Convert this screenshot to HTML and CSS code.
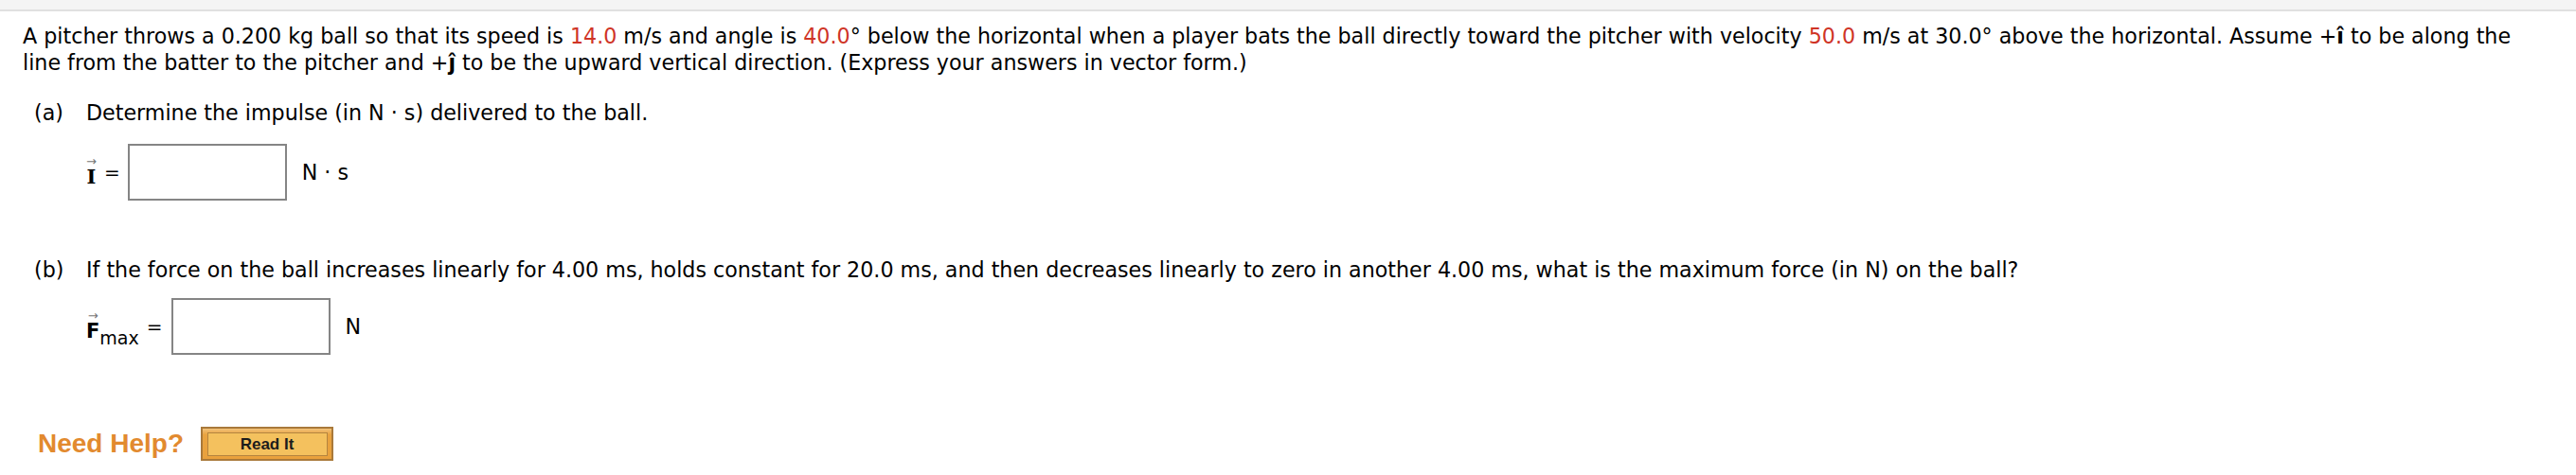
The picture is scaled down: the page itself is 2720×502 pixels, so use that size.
FILE: index.html
```html
<!DOCTYPE html>
<html lang="en">
<head>
<meta charset="utf-8">
<title>Impulse question</title>
<link rel="stylesheet" href="styles.css">
</head>
<body>
<div class="topbar"></div>
<div class="content">
  <p class="question">A pitcher throws a 0.200 kg ball so that its speed is <span class="red">14.0</span> m/s and angle is <span class="red">40.0</span>° below the horizontal when a player bats the ball directly toward the pitcher with velocity <span class="red">50.0</span> m/s at 30.0° above the horizontal. Assume +<b>î</b> to be along the line from the batter to the pitcher and +<b>ĵ</b> to be the upward vertical direction. (Express your answers in vector form.)</p>

  <div class="part part-a">
    <div class="part-label">(a)</div>
    <div class="part-body">
      <p class="prompt">Determine the impulse (in N · s) delivered to the ball.</p>
      <div class="answer-row row-a">
        <span class="vec"><span class="arrow">→</span><span class="sym serif">I</span></span>
        <span class="eq">=</span>
        <span class="box box-a"></span>
        <span class="unit">N · s</span>
      </div>
    </div>
  </div>

  <div class="part part-b">
    <div class="part-label">(b)</div>
    <div class="part-body">
      <p class="prompt">If the force on the ball increases linearly for 4.00 ms, holds constant for 20.0 ms, and then decreases linearly to zero in another 4.00 ms, what is the maximum force (in N) on the ball?</p>
      <div class="answer-row row-b">
        <span class="vec"><span class="arrow">→</span><span class="sym">F</span></span><span class="sub">max</span>
        <span class="eq">=</span>
        <span class="box box-b"></span>
        <span class="unit">N</span>
      </div>
    </div>
  </div>

  <div class="help">
    <span class="need">Need Help?</span>
    <span class="readit"><span class="readit-inner">Read It</span></span>
  </div>
</div>
</body>
</html>
```
FILE: styles.css
```css
html, body {
  margin: 0;
  padding: 0;
  background: #ffffff;
}
body {
  font-family: "DejaVu Sans", Verdana, sans-serif;
  font-size: 22.2px;
  color: #000;
}
.topbar {
  height: 10px;
  background: #f4f4f4;
  border-bottom: 2px solid #e0e0e0;
}
.content {
  padding: 12px 24px 0 24px;
}
.question {
  margin: 0;
  line-height: 28px;
}
.red {
  color: #cf3426;
}
.part {
  display: flex;
  line-height: 28px;
}
.part-a {
  margin-top: 25px;
}
.part-b {
  margin-top: 59px;
}
.part-label {
  width: 55px;
  padding-left: 12px;
}
.prompt {
  margin: 0;
}
.answer-row {
  display: flex;
  align-items: center;
}
.row-a {
  margin-top: 19px;
}
.row-b {
  margin-top: 16px;
}
.vec {
  display: inline-flex;
  flex-direction: column;
  align-items: center;
  line-height: 1;
}
.arrow {
  color: #777;
  font-size: 13px;
  line-height: 8px;
  height: 8px;
  margin-bottom: 2px;
}
.sym {
  font-weight: bold;
  font-size: 21px;
  line-height: 20px;
}
.serif {
  font-family: "DejaVu Serif", "Liberation Serif", serif;
}
.sub {
  align-self: flex-end;
  margin-bottom: 4px;
  font-size: 19px;
}
.eq {
  font-size: 20px;
}
.row-a .eq {
  margin: 0 8px 0 8px;
}
.row-b .eq {
  margin: 0 9px 0 8px;
}
.box {
  display: inline-block;
  height: 56px;
  border: 2px solid #858585;
  background: #fff;
}
.box-a {
  width: 164px;
}
.box-b {
  width: 164px;
}
.unit {
  margin-left: 16px;
}
.help {
  display: flex;
  align-items: center;
  margin-top: 76px;
  padding-left: 16px;
}
.need {
  font-family: "Liberation Sans", Arial, sans-serif;
  font-weight: bold;
  font-size: 28px;
  color: #e28a2f;
  margin-right: 18px;
}
.readit {
  display: inline-flex;
  align-items: center;
  justify-content: center;
  box-sizing: border-box;
  width: 140px;
  height: 36px;
  border: 2px solid #a9793a;
  background: linear-gradient(#f2c27a 0%, #e9a340 20%, #e9a13c 100%);
}
.readit-inner {
  box-sizing: border-box;
  width: 127px;
  height: 25px;
  border: 1px solid #b4843f;
  background: #f4c15e;
  font-family: "Liberation Sans", Arial, sans-serif;
  font-weight: bold;
  font-size: 17px;
  line-height: 23px;
  text-align: center;
  color: #1c1c1c;
}
```
